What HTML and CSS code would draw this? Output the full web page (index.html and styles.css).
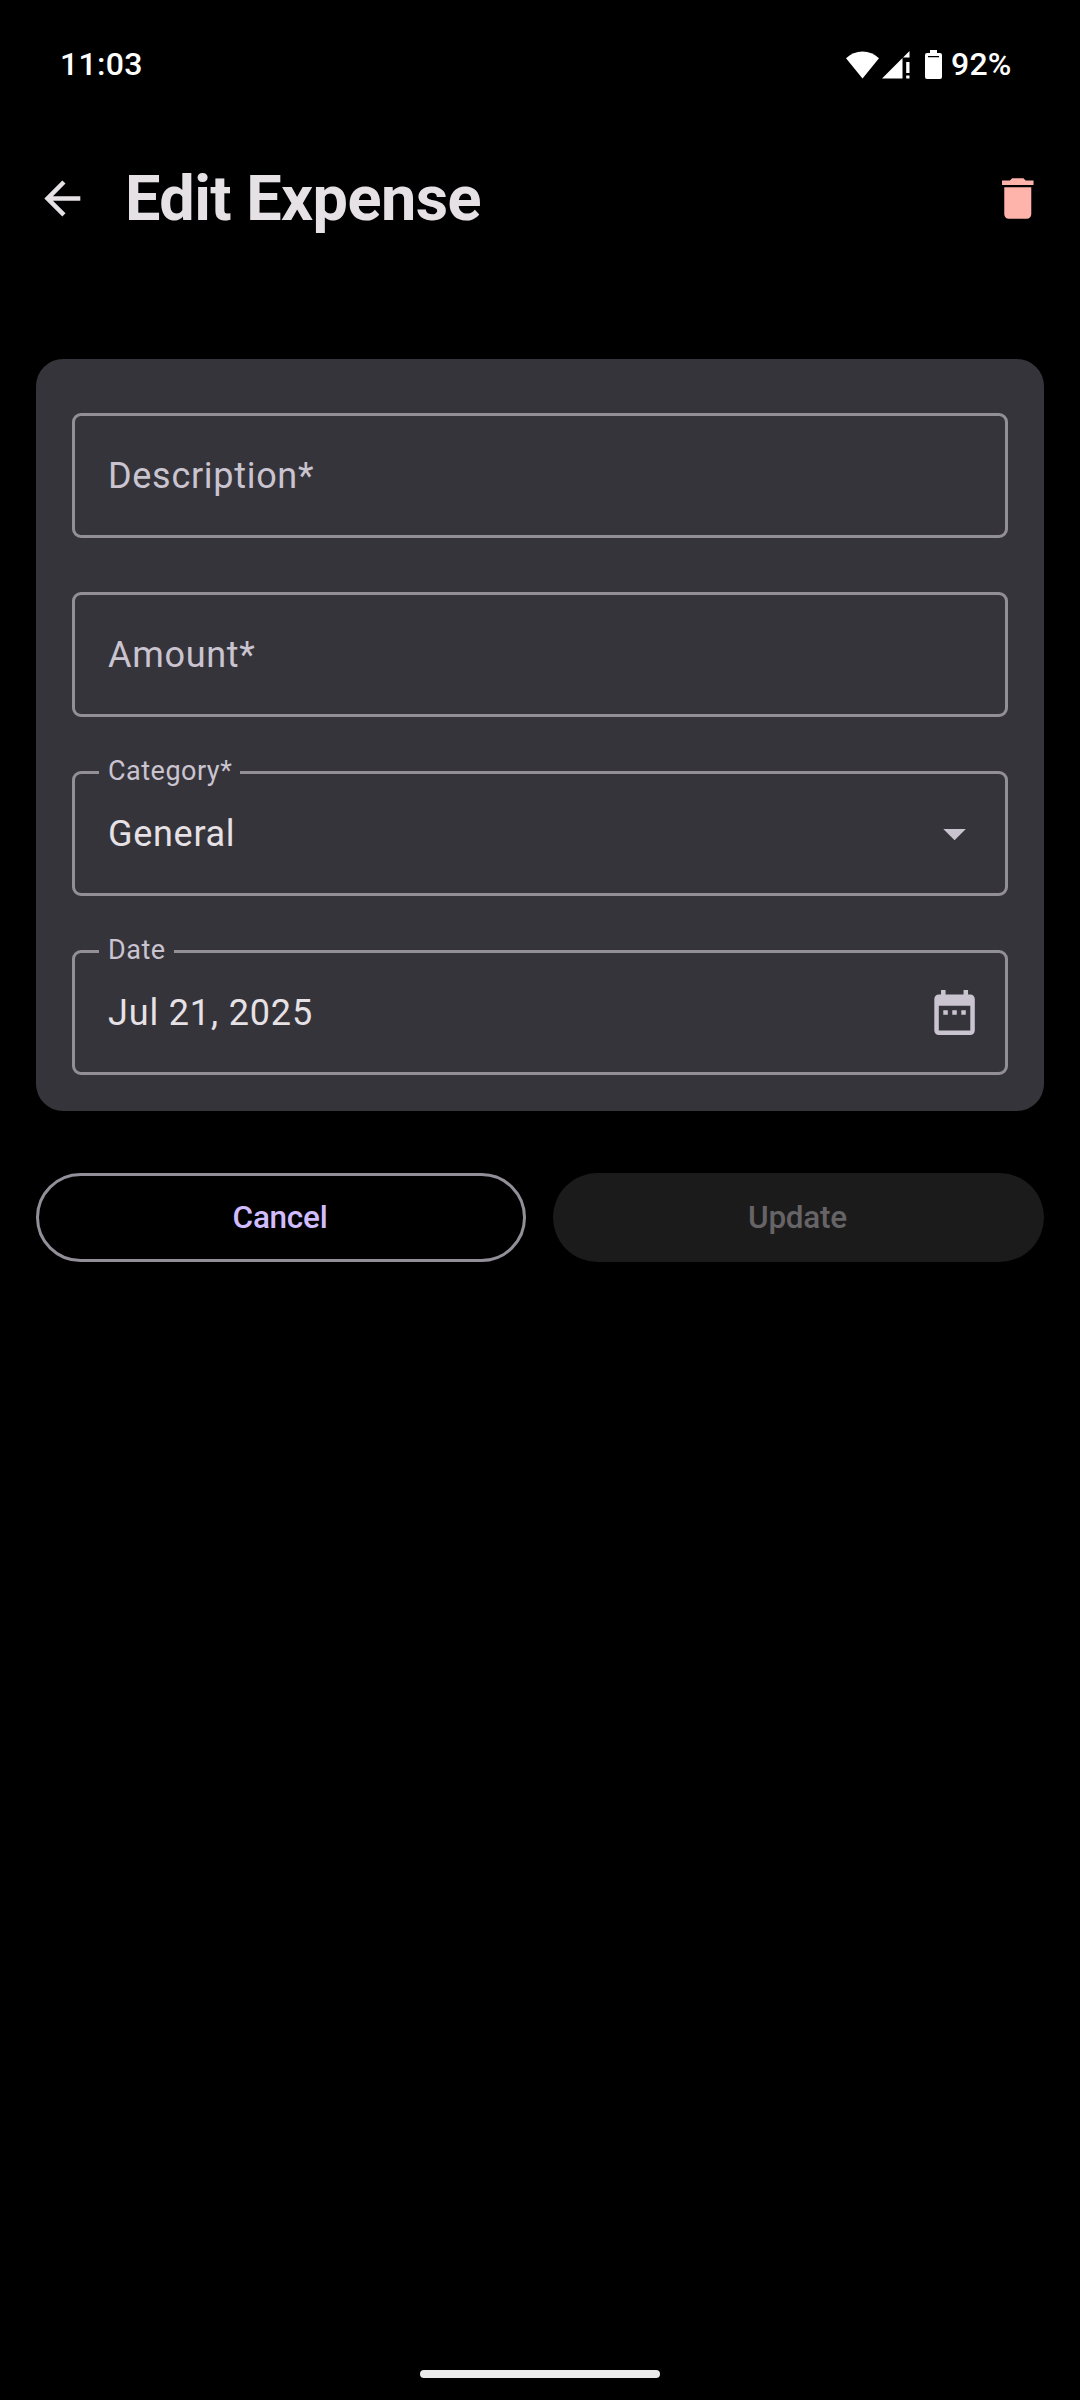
FILE: index.html
```html
<!DOCTYPE html>
<html lang="en">
<head>
<meta charset="utf-8">
<title>Edit Expense</title>
<link rel="stylesheet" href="styles.css">
</head>
<body>
<div class="screen">
  <div class="status-bar">
    <span class="clock">11:03</span>
    <div class="status-icons">
      <svg class="wifi" width="33" height="28" viewBox="0 0 33 28"><path d="M0 7.2Q7 .5 16.5 .5T33 7.2L16.5 27.5z"/></svg>
      <svg class="signal" width="28" height="28" viewBox="0 0 28 28"><path d="M0 27.500L20.500 7V27.500zM27.500 0V6.500H21z"/><path d="M24.200 11H27.500V22H24.200zM24.200 24.500H27.500V27.500H24.200z"/></svg>
      <svg class="battery" width="17" height="29" viewBox="0 0 17 29"><path fill-rule="evenodd" d="M5 0H12V3H15Q17 3 17 5V27Q17 29 15 29H2Q0 29 0 27V5Q0 3 2 3H5zM3 6V7.300H14V6z"/></svg>
      <span class="percent">92%</span>
    </div>
  </div>
  <header class="app-bar">
    <svg class="icon back" viewBox="0.3 -0.2 24 24"><path d="M20 11H7.830l5.590-5.590L12 4l-8 8 8 8 1.410-1.410L7.830 13H20v-2z"/></svg>
    <h1 class="title">Edit Expense</h1>
    <svg class="icon delete" viewBox="0.1 -0.2 24 24"><path d="M6 19c0 1.100.9 2 2 2h8c1.100 0 2-.9 2-2V7H6v12zM19 4h-3.500l-1-1h-5l-1 1H5v2h14V4z"/></svg>
  </header>
  <main class="card">
    <div class="field"><span class="placeholder">Description*</span></div>
    <div class="field"><span class="placeholder">Amount*</span></div>
    <div class="field">
      <span class="label">Category*</span>
      <span class="value">General</span>
      <svg class="icon" viewBox="0.2 -0.2 24 24"><path d="M7 10l5 5 5-5z"/></svg>
    </div>
    <div class="field">
      <span class="label">Date</span>
      <span class="value date">Jul 21, 2025</span>
      <svg class="icon" viewBox="0.2 -0.2 24 24"><path d="M9 11H7v2h2v-2zm4 0h-2v2h2v-2zm4 0h-2v2h2v-2zm2-7h-1V2h-2v2H8V2H6v2H5c-1.110 0-1.990.9-1.990 2L3 20c0 1.100.89 2 2 2h14c1.100 0 2-.9 2-2V6c0-1.100-.9-2-2-2zm0 16H5V9h14v11z"/></svg>
    </div>
  </main>
  <div class="actions">
    <button class="button cancel">Cancel</button>
    <button class="button update" disabled>Update</button>
  </div>
  <div class="nav-handle"></div>
</div>
</body>
</html>
```
FILE: styles.css
```css
* { box-sizing: border-box; }

body {
  margin: 0;
  background: #000;
  font-family: Roboto, sans-serif;
}

.screen {
  display: flex;
  flex-direction: column;
  width: 1080px;
  height: 2400px;
  padding-bottom: 22px;
}

.status-bar {
  display: flex;
  justify-content: space-between;
  align-items: center;
  height: 129px;
  padding: 0 68px 0 60px;
  color: #fff;
  fill: #fff;
  font: 500 32px/36px Roboto, sans-serif;
}

.clock { margin-bottom: 2px; letter-spacing: 0.3px; }
.status-icons { display: flex; align-items: center; }
.signal { margin-left: 3px; }
.battery { margin-left: 15px; }
.percent { width: 61px; margin: 0 0 2px 9px; letter-spacing: 0.2px; }

.icon {
  flex: none;
  width: 54px;
  height: 54px;
  margin-bottom: 1px;
  fill: #cac4d0;
}

.app-bar {
  display: flex;
  align-items: center;
  height: 139px;
  padding: 0 35px 0 36px;
}

.title {
  flex: 1;
  margin: 0 0 0 35px;
  color: #e6e1e5;
  font-size: 63px;
  font-weight: 700;
  line-height: 80px;
  letter-spacing: -0.55px;
}

.back { fill: #e6e1e5; }
.delete { fill: #ffb4ab; }

.card {
  display: flex;
  flex-direction: column;
  gap: 54px;
  margin: 91px 36px 0;
  padding: 54px 36px 36px;
  border-radius: 27px;
  background: #36343b;
}

.field {
  position: relative;
  display: flex;
  justify-content: space-between;
  align-items: center;
  height: 125px;
  padding: 0 23px 0 33px;
  border: 3px solid #938f96;
  border-radius: 9px;
  font-size: 36px;
  line-height: 54px;
  letter-spacing: 0.7px;
}

.placeholder { color: #cac4d0; }
.value { color: #e6e1e5; }
.date { letter-spacing: 0.85px; }

.label {
  position: absolute;
  top: -21px;
  left: 24px;
  padding: 0 8px 0 9px;
  background: #36343b;
  color: #cac4d0;
  font-size: 27px;
  line-height: 36px;
  letter-spacing: 0.5px;
}

.actions {
  display: grid;
  grid-template-columns: 490px 491px;
  gap: 27px;
  margin: 62px 36px 0;
}

.button {
  height: 89px;
  padding: 0 2px 0 0;
  border: 0;
  border-radius: 45px;
  background: none;
  font: 500 31.5px/45px Roboto, sans-serif;
  letter-spacing: -0.27px;
}

.cancel {
  border: 3px solid #938f99;
  color: #d0bcff;
}

.update {
  background: #1c1b1c;
  color: #666466;
}

.nav-handle {
  width: 240px;
  height: 8px;
  margin: auto auto 0;
  border-radius: 4px;
  background: #ebebeb;
}
```
